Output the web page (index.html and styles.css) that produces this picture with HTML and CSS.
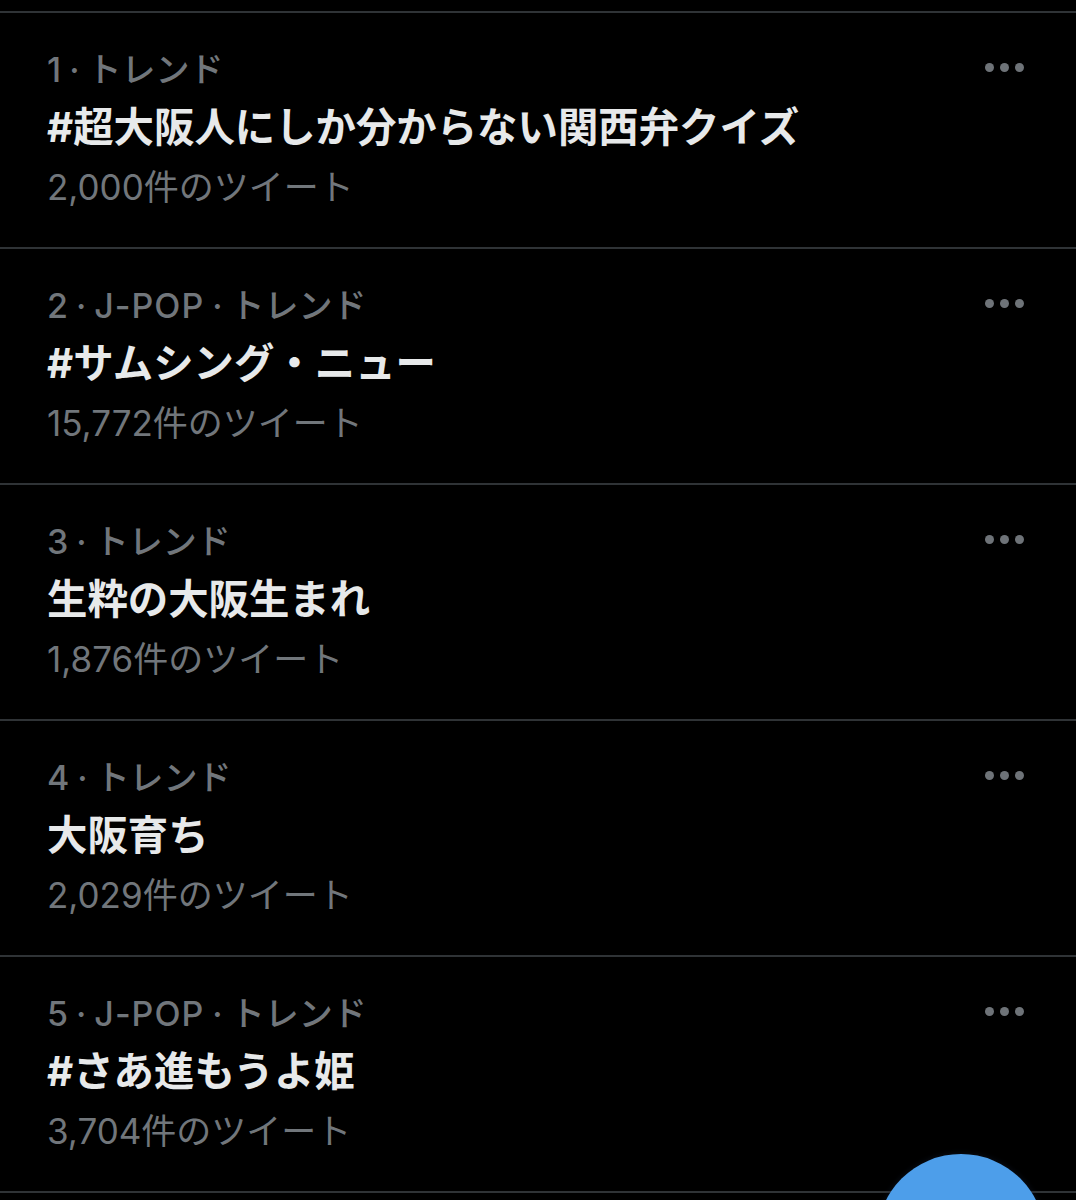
FILE: index.html
```html
<!DOCTYPE html>
<html lang="ja">
<head>
<meta charset="utf-8">
<link rel="stylesheet" href="styles.css">
</head>
<body>
<div class="page">
  <div class="top-gap"></div>
  <ul class="trends">
    <li class="trend">
      <div class="trend-body">
        <div class="trend-meta">1<span class="sep">·</span>トレンド</div>
        <div class="trend-title">#超大阪人にしか分からない関西弁クイズ</div>
        <div class="trend-count">2,000件のツイート</div>
      </div>
      <div class="more"><span></span><span></span><span></span></div>
    </li>
    <li class="trend">
      <div class="trend-body">
        <div class="trend-meta">2<span class="sep">·</span><span class="cat">J-POP</span><span class="sep">·</span>トレンド</div>
        <div class="trend-title">#サムシング・ニュー</div>
        <div class="trend-count">15,772件のツイート</div>
      </div>
      <div class="more"><span></span><span></span><span></span></div>
    </li>
    <li class="trend">
      <div class="trend-body">
        <div class="trend-meta">3<span class="sep">·</span>トレンド</div>
        <div class="trend-title">生粋の大阪生まれ</div>
        <div class="trend-count">1,876件のツイート</div>
      </div>
      <div class="more"><span></span><span></span><span></span></div>
    </li>
    <li class="trend">
      <div class="trend-body">
        <div class="trend-meta">4<span class="sep">·</span>トレンド</div>
        <div class="trend-title">大阪育ち</div>
        <div class="trend-count">2,029件のツイート</div>
      </div>
      <div class="more"><span></span><span></span><span></span></div>
    </li>
    <li class="trend">
      <div class="trend-body">
        <div class="trend-meta">5<span class="sep">·</span><span class="cat">J-POP</span><span class="sep">·</span>トレンド</div>
        <div class="trend-title">#さあ進もうよ姫</div>
        <div class="trend-count">3,704件のツイート</div>
      </div>
      <div class="more"><span></span><span></span><span></span></div>
    </li>
    <li class="trend trend-cut"></li>
  </ul>
  <div class="fab"></div>
</div>
</body>
</html>
```

FILE: styles.css
```css
html, body {
  margin: 0;
  padding: 0;
  background: #000;
}
body {
  width: 1076px;
  height: 1200px;
  overflow: hidden;
  font-family: "Inter", "Noto Sans CJK JP", "Noto Sans", sans-serif;
}
.page {
  position: relative;
  width: 1076px;
  height: 1200px;
  overflow: hidden;
}
.top-gap {
  height: 11px;
}
.trends {
  list-style: none;
  margin: 0;
  padding: 0;
}
.trend {
  display: flex;
  align-items: flex-start;
  border-top: 2px solid #2f3336;
  padding: 33px 52px 37px 47px;
}
.trend-body {
  flex: 1;
}
.trend-meta {
  font-size: 34px;
  line-height: 48px;
  color: #71767b;
  font-weight: 500;
}
.sep {
  margin: 0 8px;
}
.cat {
  letter-spacing: 1px;
}
.trend-title {
  font-size: 40.4px;
  line-height: 68px;
  color: #e7e9ea;
  font-weight: 700;
}
.trend-count {
  font-size: 35px;
  line-height: 46px;
  margin-top: 2px;
  color: #71767b;
  font-weight: 400;
}
.more {
  height: 48px;
  margin-top: -3px;
  display: flex;
  align-items: center;
  gap: 6px;
}
.more span {
  width: 9px;
  height: 9px;
  border-radius: 50%;
  background: #6e7378;
}
.fab {
  position: absolute;
  left: 877px;
  top: 1154px;
  width: 168px;
  height: 168px;
  border-radius: 50%;
  background: #4d9eea;
  box-shadow: 0 0 6px rgba(20, 30, 50, 0.6);
}
```
